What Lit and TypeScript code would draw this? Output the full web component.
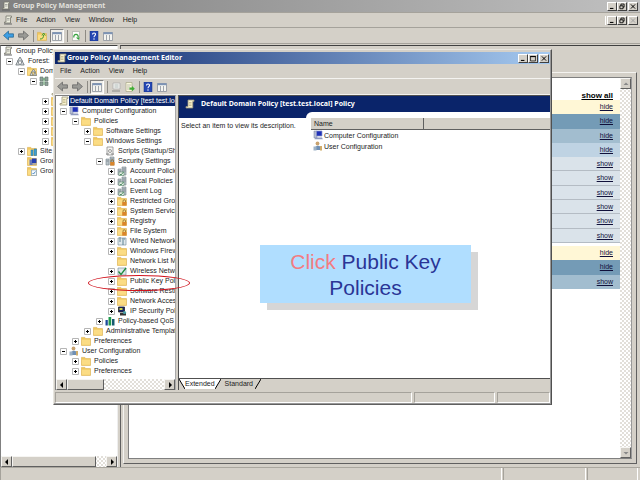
import { LitElement, html, svg, css, nothing, SVGTemplateResult } from "lit";
import { customElement, property } from "lit/decorators.js";
import { classMap } from "lit/directives/class-map.js";

const folder = svg`<path d="M.4 1.400h3.400l1 1.200h4.700v6.800H.4z" fill="#f0c75c" stroke="#dcb050" stroke-width=".6"/><path d="M1 3.600h8v5.200H1z" fill="#fbdc84"/>`;
const lock = svg`<path d="M6 6V5a1 1 0 0 1 2.500 0v1" fill="none" stroke="#8a6a2a" stroke-width=".8"/><path d="M5.200 6h4.300v3.600H5.200z" fill="#d9852a"/>`;
const servers = svg`<path d="M1 3h3v6H1zM5 1h4v8H5z" fill="#b9c3c9" stroke="#77858c" stroke-width=".6"/><path d="M1.500 5h2M5.500 3h3M5.500 5h3" stroke="#5c6a72" stroke-width=".6"/>`;
const windowPane = svg`<path d="M.5 1.500h9v8h-9z" fill="#f4f4f0" stroke="#8b929c" stroke-width=".8"/><path d="M.5 1.200h9v2h-9z" fill="#7c93b5"/><path d="M3.500 4v5M6.500 4v5" stroke="#8b929c" stroke-width=".8"/>`;
const scroll = svg`<path d="M3 1h6v1.500H7.800V9H1V7.500h2z" fill="#f7f2d0" stroke="#9a9478" stroke-width=".8"/><path d="M4 3.500h2.500M4 5h2.500M4 6.500h2.500" stroke="#b5ab7c" stroke-width=".7"/>`;

const ICONS: Record<string, SVGTemplateResult> = {
  folder,
  scroll,
  window: windowPane,
  lockFolder: svg`${folder}${lock}`,
  console: svg`<path d="M3 1h5.500v1.500H7.500V8H1.500V7H3z" fill="#ededdf" stroke="#77776c" stroke-width=".8"/><path d="M4 3.500h2.500M4 5h2.500" stroke="#888" stroke-width=".7"/><path d="M1 9h8" stroke="#666"/>`,
  computer: svg`<path d="M1 1h3v7H1z" fill="#b6bdd2" stroke="#77809f" stroke-width=".5"/><path d="M3.500 1h5.500v5H3.500z" fill="#2030b8" stroke="#8d98c8" stroke-width=".7"/><path d="M2.500 7.500h6.500l.8 1.800H1.500z" fill="#8f9abf"/>`,
  user: svg`<circle cx="4.500" cy="2.500" r="1.900" fill="#c9a26e"/><path d="M1.500 9c0-3 1.500-4.200 3.500-4.200S8.500 6 8.500 9z" fill="#6f8fb4"/><path d="M.5 5.500h3v4h-3z" fill="#9eb2c6"/><path d="M7 5h2v4.500H7z" fill="#d0ad6b"/>`,
  script: svg`<path d="M2 1h6v8H2z" fill="#f6f6f4" stroke="#8e8e8e" stroke-width=".8"/><circle cx="5" cy="5" r="1.500" fill="none" stroke="#888" stroke-width=".8"/><path d="M1 8h3M6 8h3" stroke="#888"/>`,
  security: svg`${servers}${lock}`,
  policy: svg`${servers}<path d="M2 6h5v3.500H2z" fill="#e9efe9" stroke="#58876b" stroke-width=".6"/><path d="M3 8l1 1 2.500-3" fill="none" stroke="#2c7a45" stroke-width=".8"/>`,
  wired: svg`<path d="M1 2h8v7H1z" fill="#dfe8ec" stroke="#7e97a3" stroke-width=".7"/><path d="M3 1v5M5 3h3M6 4v5" stroke="#50788a" stroke-width=".9"/>`,
  wireless: svg`<path d="M1 2h8v7H1z" fill="#dfe8ec" stroke="#7e97a3" stroke-width=".7"/><path d="M1.500 5.500l2.500 3L9 2" fill="none" stroke="#1d8a3d" stroke-width="1.300"/>`,
  ipsec: svg`<path d="M1.500 1h6v5h-6z" fill="#16246b" stroke="#222" stroke-width=".8"/><path d="M2.500 2h3v2h-3z" fill="#cdd54b"/><path d="M3 7h6v2.500H3z" fill="#353535"/><circle cx="7.500" cy="6.500" r="1.600" fill="#4aa0a8"/>`,
  chart: svg`<path d="M.5 4h2.300v5.500H.5z" fill="#1c4a9a"/><path d="M3.500 1h2.700v8.500H3.500z" fill="#1f9a4c"/><path d="M7 3h2.500v6.500H7z" fill="#155a70"/>`,
  forest: svg`<path d="M5 1L2.500 5h5zM2.800 5L.8 9h3.800zM7.200 5L5.400 9h3.800z" fill="#d7dbdd" stroke="#6b7478" stroke-width=".8"/>`,
  domains: svg`${folder}<path d="M6.500 3l-2 3h4zM4.500 6l-1.500 3.500h3zM8 6L6.500 9.500h3z" fill="#cdd3d6" stroke="#5f686c" stroke-width=".6"/>`,
  domain: svg`<path d="M1 1h3v4H1zM6 1h3v4H6zM1 6h3v3.500H1zM6 6h3v3.500H6z" fill="#8fa19a" stroke="#5f726a" stroke-width=".6"/><path d="M4 3h2M5 2v7" stroke="#4c9a58" stroke-width=".8"/>`,
  sites: svg`${folder}<path d="M4 4h2v5.500H4zM7 3h2.500v6.500H7z" fill="#3f9ed0" stroke="#2b76a0" stroke-width=".5"/>`,
  modeling: svg`${folder}<path d="M2.500 3.500h3v5.500h-3z" fill="#6d7bb5"/><path d="M5 2.500h4.500v4.500H5z" fill="#2740b0"/><path d="M5 8h4.500" stroke="#6d7bb5"/>`,
  results: svg`${folder}<path d="M4.500 4h5v5.500h-5z" fill="#f4f8fb" stroke="#6e93b8" stroke-width=".6"/><path d="M5.500 7l1 1 2-2.500" fill="none" stroke="#2a72b8" stroke-width=".8"/>`,
  backBlue: svg`<path d="M.5 5L5 1v2.500h4.500v3H5V9z" fill="#3c9fe6" stroke="#27658f" stroke-width=".7"/>`,
  back: svg`<path d="M.5 5L5 1v2.500h4.500v3H5V9z" fill="#9a9a96" stroke="#666" stroke-width=".7"/>`,
  forward: svg`<path d="M9.500 5L5 1v2.500H.5v3H5V9z" fill="#9a9a96" stroke="#666" stroke-width=".7"/>`,
  up: svg`${folder}<path d="M3 8c3 0 3.500-1.500 3.500-4M5 4.500L6.700 2l1.600 2.600" fill="none" stroke="#3f9b33" stroke-width="1"/>`,
  refresh: svg`<path d="M1.500.5h7v9h-7z" fill="#fbfbf8" stroke="#a0a39c" stroke-width=".6"/><path d="M3 6.500a2.200 2.200 0 1 1 4 0" fill="none" stroke="#35a23c" stroke-width="1.200"/><path d="M5 6.500h3.700L7.500 9z" fill="#35a23c"/>`,
  help: svg`<path d="M1 0h8v10H1z" fill="#2547b4" stroke="#17307c" stroke-width=".5"/><path d="M3.500 3.500C3.500 1.500 6.700 1.500 6.500 3.500 6.400 4.700 5 4.600 5 6.200" fill="none" stroke="#fff" stroke-width="1.100"/><circle cx="5" cy="8" r=".7" fill="#fff"/>`,
  props: svg`<path d="M2 1h7v6H2z" fill="#f2f2ee" stroke="#aaa" stroke-width=".7"/><path d="M3.500 3h4M3.500 5h4" stroke="#9aa" stroke-width=".7"/><path d="M1 9h8" stroke="#8a8a86"/>`,
  export: svg`<path d="M1 .5h6v9H1z" fill="#faf8dc" stroke="#a8a68a" stroke-width=".7"/><path d="M2 3h4M2 5h3M2 7h3" stroke="#999" stroke-width=".6"/><path d="M4.500 5.500h2.500V4l2.800 2.700L7 9.300V7.800H4.500z" fill="#3fae34"/>`,
  min: svg`<path d="M2 7h5v1.500H2z" fill="#000"/>`,
  max: svg`<path d="M1.500 2h7v6.500h-7z" fill="none" stroke="#000"/><path d="M1 1.500h8v1.500H1z" fill="#000"/>`,
  restore: svg`<path d="M3.500 4V1.500H8V6H6.500M2 4h4.500v4.200H2z" fill="none" stroke="#000" stroke-width="1.200"/>`,
  close: svg`<path d="M2 2l6 6M8 2L2 8" stroke="#000" stroke-width="1.400"/>`,
  closeDim: svg`<path d="M2 2l6 6M8 2L2 8" stroke="#999" stroke-width="1.200"/>`,
  left: svg`<path d="M6 2v6L3 5z" fill="#000"/>`,
  right: svg`<path d="M4 2v6l3-3z" fill="#000"/>`,
  upArrow: svg`<path d="M2.500 6h5L5 3.500z" fill="#888"/>`,
  downArrow: svg`<path d="M2.500 4h5L5 6.500z" fill="#888"/>`,
};

const base = css`
  * { box-sizing: border-box; }
  button { font: inherit; color: inherit; border: 0; padding: 0; margin: 0; background: none; }
  .icon { width: 10px; height: 10px; flex: none; display: block; }
`;

const icon = (name: string) =>
  html`<svg class="icon" viewBox="0 0 10 10" aria-hidden="true">${ICONS[name]}</svg>`;

interface Row { depth: number; icon: string; text: string; sign?: "+" | "-"; selected?: boolean; }
const row = (depth: number, sign: "+" | "-" | "", icon: string, text: string): Row =>
  ({ depth, icon, text, sign: sign || undefined });

@customElement("tree-view")
export class TreeView extends LitElement {
  @property({ attribute: false }) rows: Row[] = [];
  static styles = [base, css`
    :host { display: block; overflow: hidden; }
    ul { list-style: none; margin: 0; padding: 0; }
    .row { display: flex; align-items: center; height: 10px; white-space: nowrap; }
    .indent { flex: none; width: calc(var(--depth) * 12px); }
    .sign { width: 12px; flex: none; display: flex; justify-content: center; }
    .sign svg { width: 7px; height: 7px; display: block; }
    .label { flex: 1; text-align: left; height: 10px; line-height: 10px; padding-left: 3px; }
    .root .sign { width: 0; }
    .selected .sign { width: 2px; }
    .selected .label { background: #0a246a; color: #fff; padding-left: 1px; }
  `];
  render() {
    return html`<ul role="tree">${this.rows.map((r) => html`
      <li role="treeitem" class=${classMap({ row: true, root: r.depth < 0, selected: !!r.selected })}>
        <span class="indent" style=${`--depth:${Math.max(r.depth, 0)}`}></span>
        <span class="sign">${r.sign ? html`<svg viewBox="0 0 7 7"><path d="M.5.5h6v6h-6z" fill="#fff" stroke="#b5b5b5"/><path d=${r.sign === "+" ? "M2 3.500h3M3.500 2v3" : "M2 3.500h3"} stroke="#000"/></svg>` : nothing}</span>
        ${icon(r.icon)}<button class="label">${r.text}</button>
      </li>`)}</ul>`;
  }
}

@customElement("scroll-bar")
export class ScrollBar extends LitElement {
  @property({ type: Boolean, reflect: true }) vertical = false;
  @property({ type: Number }) thumb = 0;
  static styles = [base, css`
    :host { display: flex; height: 11px; background: repeating-conic-gradient(#fff 0 25%, #e2dfd9 0 50%) 0 0 / 4px 4px; }
    :host([vertical]) { flex-direction: column; width: 11px; height: auto; justify-content: space-between; }
    button, .thumb { background: #d4d0c8; border: 1px solid; border-color: #f6f5f2 #606060 #606060 #f6f5f2; }
    button { width: 11px; height: 11px; flex: none; display: grid; place-items: center; overflow: hidden; }
    .track { flex: 1; display: flex; }
  `];
  render() {
    return html`<button aria-label="Scroll back">${icon(this.vertical ? "upArrow" : "left")}</button>
      <div class="track">${this.thumb ? html`<div class="thumb" style=${`width:${this.thumb}%`}></div>` : nothing}</div>
      <button aria-label="Scroll forward">${icon(this.vertical ? "downArrow" : "right")}</button>`;
  }
}

@customElement("window-buttons")
export class WindowButtons extends LitElement {
  @property({ attribute: false }) names: string[] = [];
  static styles = [base, css`
    :host { display: flex; }
    button { width: 10px; height: 9px; background: #d4d0c8; border: 1px solid; border-color: #fff #404040 #404040 #fff; display: grid; place-items: center; }
    button:last-child { margin-left: 1px; }
    .icon { width: 8px; height: 7px; }
  `];
  render() {
    return this.names.map((n) => html`<button aria-label=${n}>${icon(n)}</button>`);
  }
}

@customElement("tool-bar")
export class ToolBar extends LitElement {
  @property({ attribute: false }) items: string[] = [];
  static styles = [base, css`
    :host { display: flex; align-items: center; gap: 4px; }
    .arrow .icon { width: 11px; height: 11px; }
    .pressed { background: #f1efea; border: 1px solid; border-color: #808080 #fff #fff #808080; padding: 1px; margin: 0 -1px; }
    .sep { width: 1px; height: 12px; margin-right: -1px; background: #8d8a84; }
  `];
  render() {
    return this.items.map((n, i) => n === "|" ? html`<span class="sep"></span>`
      : n === "[window]" ? html`<button class="pressed" aria-label="Show tree">${icon("window")}</button>`
      : html`<button class=${classMap({ arrow: i < 2 })} aria-label=${n}>${icon(n)}</button>`);
  }
}

const OUTER: Row[] = [
  row(-1, "", "console", "Group Policy"),
  row(0, "-", "forest", "Forest:"),
  row(1, "-", "domains", "Dom"),
  row(2, "-", "domain", ""),
  row(3, "", "scroll", ""),
  ...Array.from({ length: 5 }, () => row(3, "+", "folder", "")),
  row(1, "+", "sites", "Site"),
  row(1, "", "modeling", "Grou"),
  row(1, "", "results", "Grou"),
];

const EDITOR: Row[] = [
  { depth: -1, icon: "scroll", text: "Default Domain Policy [test.test.loc", selected: true },
  row(0, "-", "computer", "Computer Configuration"),
  row(1, "-", "folder", "Policies"),
  row(2, "+", "folder", "Software Settings"),
  row(2, "-", "folder", "Windows Settings"),
  row(3, "", "script", "Scripts (Startup/Sh"),
  row(3, "-", "security", "Security Settings"),
  row(4, "+", "policy", "Account Policie"),
  row(4, "+", "policy", "Local Policies"),
  row(4, "+", "policy", "Event Log"),
  row(4, "+", "lockFolder", "Restricted Grou"),
  row(4, "+", "lockFolder", "System Service"),
  row(4, "+", "lockFolder", "Registry"),
  row(4, "+", "lockFolder", "File System"),
  row(4, "+", "wired", "Wired Network"),
  row(4, "+", "folder", "Windows Firew"),
  row(4, "", "folder", "Network List M"),
  row(4, "+", "wireless", "Wireless Netwo"),
  row(4, "+", "folder", "Public Key Polic"),
  row(4, "+", "folder", "Software Restri"),
  row(4, "+", "folder", "Network Acces"),
  row(4, "+", "ipsec", "IP Security Poli"),
  row(3, "+", "chart", "Policy-based QoS"),
  row(2, "+", "folder", "Administrative Templat"),
  row(1, "+", "folder", "Preferences"),
  row(0, "-", "user", "User Configuration"),
  row(1, "+", "folder", "Policies"),
  row(1, "+", "folder", "Preferences"),
];

@customElement("policy-editor")
export class PolicyEditor extends LitElement {
  static styles = [base, css`
    :host { display: flex; flex-direction: column; background: #d4d0c8; border: 1px solid; border-color: #e8e6e0 #505050 #606060 #e8e6e0; padding: 1px; box-shadow: inset -1px -1px #999; }
    .title { display: flex; align-items: center; height: 12px; margin-top: 1px; padding: 0 1px 0 2px; background: linear-gradient(90deg, #0a246a, #a6caf0); color: #fff; }
    .title h1 { font: bold 7px/12px "Noto Sans", sans-serif; margin: 0; flex: 1; }
    .menu { display: flex; align-items: center; gap: 9px; height: 15px; padding-left: 5px; border-bottom: 1px solid #f4f3f0; }
    tool-bar { height: 16px; padding-left: 2px; border-bottom: 1px solid #f4f3f0; }
    .body { flex: 1; display: flex; min-height: 0; }
    .side { width: 121px; display: flex; flex-direction: column; background: #fff; border: 1px solid #808080; border-right: 1px solid #aaa; border-bottom: 0; }
    .side tree-view { flex: 1; padding-left: 1px; }
    .main { flex: 1; min-width: 0; margin-left: 2px; display: flex; flex-direction: column; border: 1px solid #505050; border-right: 0; border-bottom: 0; }
    .banner { display: flex; align-items: center; gap: 6px; height: 16px; padding-left: 6px; background: #0a246a; color: #fff; }
    .banner h2 { font: bold 7px/16px "Noto Sans", sans-serif; margin: 0; }
    .detail { flex: 1; display: flex; background: #fff; min-height: 0; }
    .about { width: 127px; }
    .strip { height: 6px; background: #0a246a; }
    .about p { margin: 0; padding: 3px 2px; line-height: 10px; white-space: nowrap; }
    .items { flex: 1; background: linear-gradient(#0a246a, #0a246a) 0 0 / 6px 6px no-repeat; }
    .sheet { background: #fff; border-top-left-radius: 6px; padding: 6px 0 0 5px; }
    table { width: 100%; border-collapse: collapse; table-layout: fixed; }
    th { height: 11px; padding: 1px 0 0 3px; text-align: left; font-weight: normal; line-height: 9px; background: #d4d0c8; border-bottom: 1px solid #606060; }
    th:first-child { width: 112px; border-right: 1px solid #606060; }
    td { height: 11px; padding: 0 0 0 2px; }
    td button { display: flex; align-items: center; gap: 1px; height: 11px; line-height: 11px; white-space: nowrap; }
    .tabs { display: flex; height: 12px; border-top: 1px solid #505050; background: #d4d0c8; }
    .tabs button { display: flex; align-items: stretch; line-height: 10px; height: 10px; }
    .tabs .active span { background: #fff; padding: 0; }
    .tabs span { padding: 0 2px 0 4px; }
    .edge { width: 6px; height: 10px; display: block; }
    .status { display: flex; gap: 2px; height: 13px; padding-top: 2px; }
    .status span { border: 1px solid; border-color: #a5a29b #fff #fff #a5a29b; height: 11px; }
    .grow { flex: 1; }
    .mid { width: 81px; }
    .end { width: 53px; }
  `];
  render() {
    return html`
      <header class="title">${icon("scroll")}<h1>Group Policy Management Editor</h1>
        <window-buttons .names=${["min", "max", "close"]}></window-buttons></header>
      <nav class="menu">${["File", "Action", "View", "Help"].map((m) => html`<button>${m}</button>`)}</nav>
      <tool-bar .items=${["back", "forward", "|", "[window]", "|", "props", "export", "|", "help", "window"]}></tool-bar>
      <div class="body">
        <div class="side"><tree-view .rows=${EDITOR}></tree-view><scroll-bar thumb="38"></scroll-bar></div>
        <main class="main">
          <div class="banner">${icon("scroll")}<h2>Default Domain Policy [test.test.local] Policy</h2></div>
          <div class="detail">
            <div class="about"><div class="strip"></div><p>Select an item to view its description.</p></div>
            <div class="items"><div class="sheet"><table>
              <thead><tr><th>Name</th><th></th></tr></thead>
              <tbody>
                <tr><td colspan="2"><button>${icon("computer")}Computer Configuration</button></td></tr>
                <tr><td colspan="2"><button>${icon("user")}User Configuration</button></td></tr>
              </tbody></table></div></div>
          </div>
          <div class="tabs">
            <button class="active"><svg class="edge" viewBox="0 0 6 10"><path d="M0 0h6v10z" fill="#fff"/><path d="M0 0l6 10" stroke="#000"/></svg><span>Extended</span><svg class="edge" viewBox="0 0 6 10"><path d="M0 0h6L0 10z" fill="#fff"/><path d="M6 0L0 10" stroke="#000"/></svg></button>
            <button><span>Standard</span><svg class="edge" viewBox="0 0 6 10"><path d="M6 0L0 10" stroke="#000"/></svg></button>
          </div>
        </main>
      </div>
      <footer class="status"><span class="grow"></span><span class="mid"></span><span class="end"></span></footer>`;
  }
}

const GROUPS: [string, string][][] = [
  [["cream", "hide"], ["steel", "hide"], ["sky", "hide"], ["pale", "hide"]],
  Array.from({ length: 6 }, (): [string, string] => ["mist", "show"]),
  [["cream", "hide"], ["steel", "hide"], ["sky", "show"]],
];

@customElement("app-root")
export class AppRoot extends LitElement {
  static styles = [base, css`
    :host { display: flex; flex-direction: column; position: relative; height: 100vh; overflow: hidden; background: #d4d0c8; color: #1c1c1c; font: 7px/10px "Liberation Sans", Arial, sans-serif; }
    .title { display: flex; align-items: center; gap: 2px; height: 12px; padding: 0 2px 0 1px; background: linear-gradient(90deg, #808080, #c0c0c0); color: #e2e0dc; }
    .title h1 { font: bold 7px/12px "Noto Sans", sans-serif; margin: 0; flex: 1; }
    .menu { display: flex; align-items: center; gap: 9px; height: 16px; padding: 0 2px 0 3px; border: 1px solid #a5a29b; border-width: 1px 0; }
    .menu > .icon { margin-right: -6px; }
    .spacer { flex: 1; }
    .mdi { border-left: 1px solid #fff; padding-left: 1px; }
    .tools { height: 16px; padding-left: 3px; border-bottom: 1px solid #a5a29b; }
    .body { flex: 1; display: flex; gap: 2px; min-height: 0; margin-top: 1px; }
    .side { width: 118px; display: flex; flex-direction: column; background: #fff; border-left: 1px solid #808080; border-top: 1px solid #404040; border-right: 1px solid #eee; }
    .side tree-view { flex: 1; padding-left: 2px; }
    .main { flex: 1; display: flex; border-left: 1px solid #606060; border-top: 1px solid #404040; padding: 26px 3px 3px 2px; }
    .frame { flex: 1; display: flex; border: 1px solid; border-color: #f4f3f0 #606060 #606060 #f4f3f0; padding: 4px; }
    .page { flex: 1; display: flex; background: #fff; border: 1px solid #808080; border-right-color: #999; }
    .report { flex: 1; font: 7px/14px "Liberation Sans", Arial, sans-serif; text-align: right; }
    .report a { color: #10103a; }
    .all { height: 22px; padding: 11px 7px 0 0; line-height: 14px; font-weight: bold; font-size: 8px; }
    .all a { position: relative; display: block; color: #000; }
    .group { display: grid; grid-auto-rows: 1fr; height: 86px; }
    .first { height: 57px; }
    .last { height: 43px; margin-top: 3px; }
    .line { padding-right: 7px; }
    .cream { background: #fff7d6; }
    .steel { background: #749bb6; }
    .sky { background: #a2bdcf; }
    .pale { background: #bfd3e3; }
    .mist { background: #dae3ea; border-bottom: 1px solid #b4bcc4; line-height: 13px; }
    .status { display: flex; gap: 1px; height: 13px; border-top: 1px solid #aaa79f; padding-right: 2px; }
    .status span { border-right: 1px solid #fff; border-left: 1px solid #a5a29b; }
    .grow { flex: 1; }
    .mid { width: 83px; }
    .end { width: 51px; }
    policy-editor { position: absolute; left: 53px; right: 88px; top: 49px; bottom: 75px; }
    .ring { position: absolute; left: 88px; top: 275px; width: 102px; height: 16px; border: 1px solid #d0141e; border-radius: 50%; pointer-events: none; }
    .callout { position: absolute; left: 260px; top: 245px; width: 211px; height: 58px; margin: 0; padding-top: 4px; background: #b0deff; box-shadow: 7px 7px #d6d6d6; color: #2a3596; font-size: 21px; line-height: 26px; text-align: center; }
    .callout em { font-style: normal; color: #f27c82; }
  `];
  render() {
    return html`
      <header class="title">${icon("console")}<h1>Group Policy Management</h1>
        <window-buttons .names=${["min", "restore", "close"]}></window-buttons></header>
      <nav class="menu">${icon("console")}${["File", "Action", "View", "Window", "Help"].map((m) => html`<button>${m}</button>`)}
        <span class="spacer"></span><window-buttons class="mdi" .names=${["min", "restore", "closeDim"]}></window-buttons></nav>
      <tool-bar class="tools" .items=${["backBlue", "forward", "|", "up", "[window]", "|", "refresh", "|", "help", "window"]}></tool-bar>
      <div class="body">
        <aside class="side"><tree-view .rows=${OUTER}></tree-view><scroll-bar thumb="89"></scroll-bar></aside>
        <section class="main"><div class="frame"><div class="page">
          <div class="report">
            <div class="all"><a href="#all">show all</a></div>
            ${GROUPS.map((g, i) => html`<div class=${classMap({ group: true, first: i === 0, last: i === 2 })}>
              ${g.map(([tone, label]) => html`<div class="line ${tone}"><a href="#section">${label}</a></div>`)}</div>`)}
          </div>
          <scroll-bar vertical></scroll-bar>
        </div></div></section>
      </div>
      <footer class="status"><span class="grow"></span><span class="mid"></span><span class="end"></span></footer>
      <policy-editor></policy-editor>
      <div class="ring"></div>
      <p class="callout"><em>Click</em> Public Key<br>Policies</p>`;
  }
}
